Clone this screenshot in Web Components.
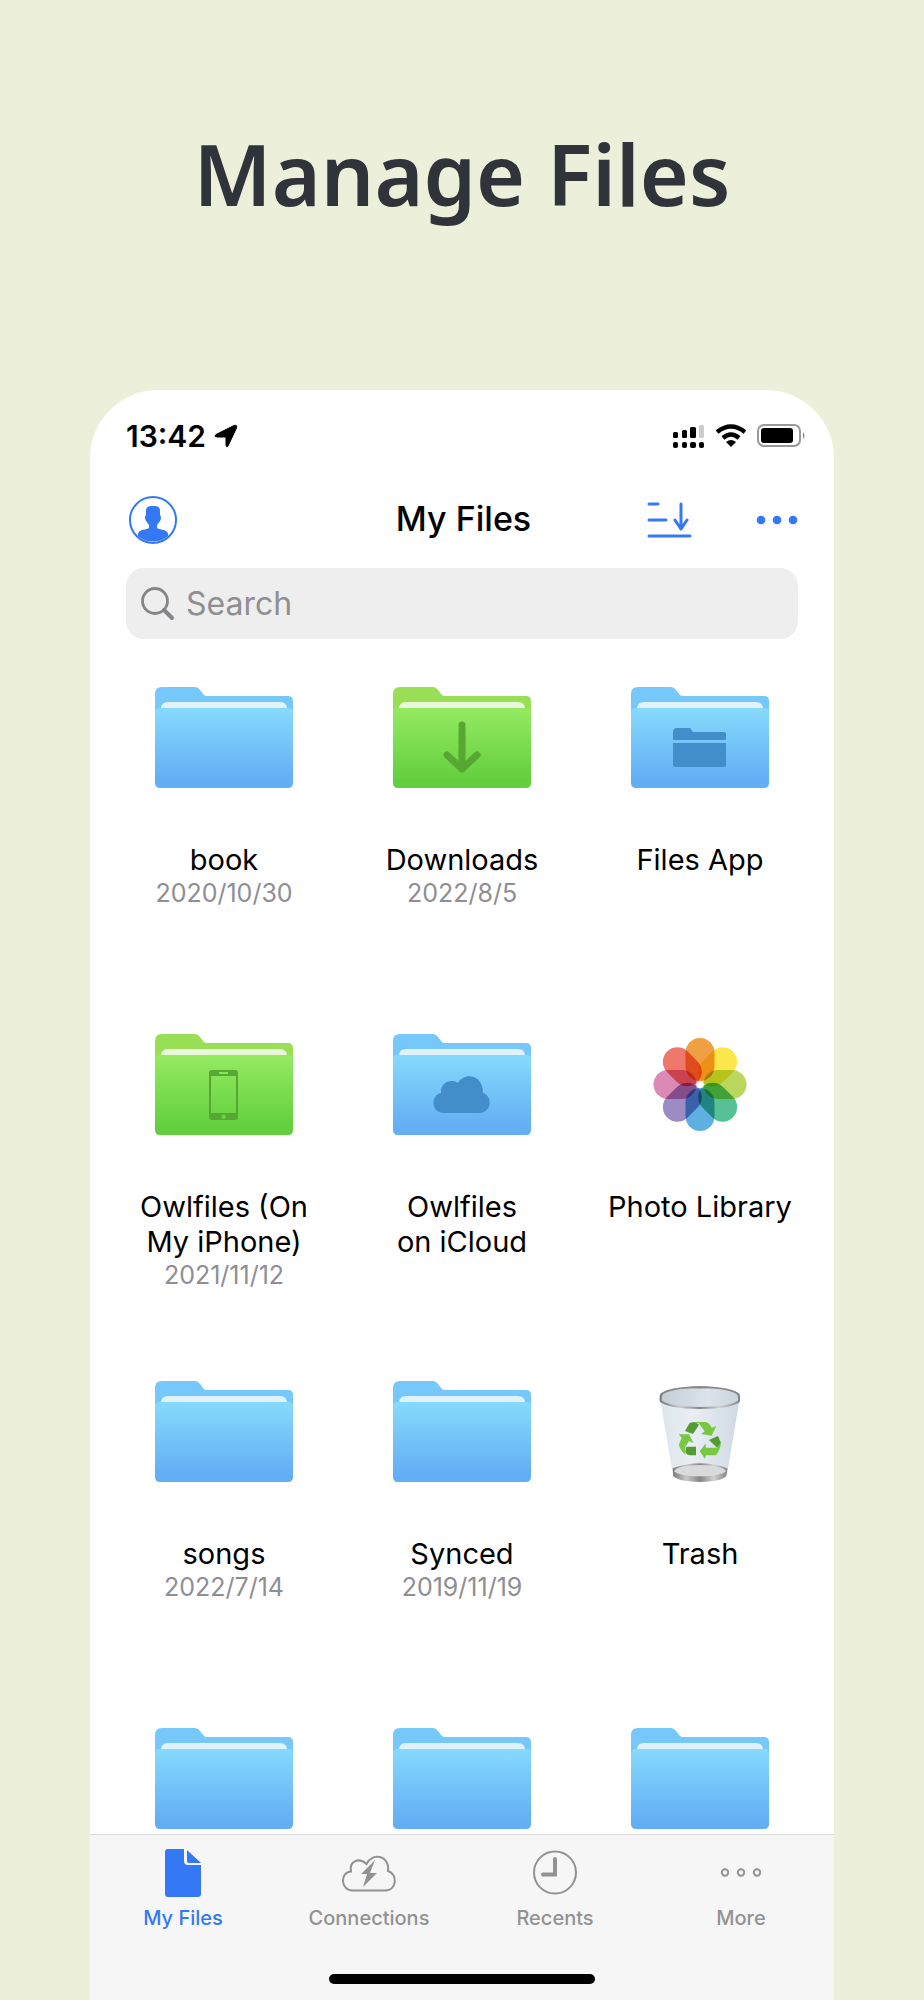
<!DOCTYPE html>
<html lang="en">
<head>
<meta charset="utf-8">
<meta name="viewport" content="width=device-width, initial-scale=1">
<title>Manage Files</title>
<style>
    html, body {
        margin: 0;
        height: 100%;
    }
    body {
        background-color: #ecf0da;
        font-family: Inter, "Liberation Sans", sans-serif;
        color: #000;
    }
</style>
</head>
<body>

<promo-page>
    <span slot="headline">Manage Files</span>
    <status-bar time="13:42"></status-bar>
    <nav-bar>My Files</nav-bar>
    <search-field placeholder="Search"></search-field>
    <file-grid>
        <file-item name="book" date="2020/10/30"></file-item>
        <file-item name="Downloads" date="2022/8/5" color="green" glyph="download"></file-item>
        <file-item name="Files App" glyph="folder"></file-item>
        <file-item name="Owlfiles (On My iPhone)" date="2021/11/12" color="green" glyph="phone"></file-item>
        <file-item name="Owlfiles on&nbsp;iCloud" glyph="cloud"></file-item>
        <file-item name="Photo Library" picture="photos"></file-item>
        <file-item name="songs" date="2022/7/14"></file-item>
        <file-item name="Synced" date="2019/11/19"></file-item>
        <file-item name="Trash" picture="trash"></file-item>
        <file-item></file-item>
        <file-item></file-item>
        <file-item></file-item>
    </file-grid>
    <tab-bar>
        <tab-item icon="file" active>My Files</tab-item>
        <tab-item icon="connections">Connections</tab-item>
        <tab-item icon="recents">Recents</tab-item>
        <tab-item icon="more">More</tab-item>
    </tab-bar>
</promo-page>

<script>
    ((customElements)=>{
        'use strict';

        // marks drawn on the front of a folder
        const GLYPHS = {
            download: `<path d="M69 38v44M54 68l15 14 15-14" fill="none" stroke="var(--glyph)" stroke-width="7" stroke-linecap="round" stroke-linejoin="round"/>`,
            folder: `<path fill="var(--glyph)" d="M42 53v-8q0-4 4-4h13l3 4h31q2 0 2 2v6zM42 56h53v22q0 2-2 2H44q-2 0-2-2z"/>`,
            phone: `<path fill="var(--glyph)" fill-rule="evenodd" d="M57 36h23q3 0 3 3v44q0 3-3 3H57q-3 0-3-3V39q0-3 3-3zM56 42v37h25V42zM64 38v2h9v-2zM68.500 80.500a2.300 2.300 0 1 0 .1 0z"/>`,
            cloud: `<path fill="var(--glyph)" d="M51 79C38 79 37 61 48 59C47 49 58 44 65 49C71 38 90 40 90 59C100 62 99 79 86 79z"/>`
        };

        const PETALS = ['#f0a043', '#fbe74c', '#b9d75c', '#58c095', '#5eb0e1', '#9d8cc3', '#da8ab5', '#ee786c'];

        const PICTURES = {
            photos: PETALS.map((color, index)=>
                `<rect x="54.500" y="4" width="29" height="43" rx="14.500" fill="${color}" style="mix-blend-mode:multiply" transform="rotate(${index * 45} 69 50.500)"/>`
            ).join('') + '<circle cx="69" cy="50.500" r="3.500" fill="#fff"/>',
            trash: `
                <defs>
                    <linearGradient id="glass"><stop stop-color="#dce5ec"/><stop offset=".4" stop-color="#e9eef3"/><stop offset="1" stop-color="#cfd9e2"/></linearGradient>
                    <linearGradient id="inner"><stop stop-color="#c3cdd5"/><stop offset=".6" stop-color="#dbe4ea"/><stop offset="1" stop-color="#c9d3da"/></linearGradient>
                    <linearGradient id="metal"><stop stop-color="#777"/><stop offset=".25" stop-color="#c9c9c9"/><stop offset=".5" stop-color="#858585"/><stop offset=".75" stop-color="#d0d0d0"/><stop offset="1" stop-color="#858585"/></linearGradient>
                </defs>
                <g transform="translate(-11 -21) scale(.33333)">
                    <path fill="url(#glass)" d="M119 110L159 345Q240 375 321 345L360 110Z"/>
                    <path fill="url(#metal)" d="M158 325Q240 295 322 325L319 349Q300 366 240 366Q180 366 160 349Z"/>
                    <path fill="#d9dadc" d="M162 334Q174 315 240 315Q307 315 318 334Q300 349 240 349Q180 349 162 334Z"/>
                    <path fill="url(#inner)" stroke="url(#metal)" stroke-width="6" d="M122 108Q132 84 240 82Q347 84 357 108V123Q335 143 240 144Q145 143 122 123Z"/>
                    <path fill="none" stroke="#89898b" stroke-width="5" d="M121 104Q145 83 240 81Q335 83 358 104"/>
                    <path fill="#78c844" d="M210 186H256Q267 187 275 203L289 198L275 227L243 222L254 214L236 190Z"/>
                    <path fill="#539b32" d="M195 213L209 189Q224 183 237 194L219 222Z"/>
                    <path fill="#78c844" d="M176 223L207 223L221 249L207 244L196 260V284Q176 265 177 253L185 233Z"/>
                    <path fill="#539b32" d="M199 260H228V286H208Q195 283 197 270Z"/>
                    <path fill="#539b32" d="M267 240L294 228L302 247Q302 261 292 264Z"/>
                    <path fill="#78c844" d="M302 250Q302 269 288 286H258L255 296L239 274L256 251L258 263H290Z"/>
                </g>`
        };

        const TAB_ICONS = {
            file: `<path fill="currentColor" d="M13 0h16v12q0 4 4 4h13v29q0 3-3 3H13q-3 0-3-3V3q0-3 3-3zM32 1l14 13H34q-2 0-2-2z"/>`,
            connections: `
                <path fill="none" stroke="currentColor" stroke-width="2" d="M12 41.500C-1 41.500-1 23 10 22.500C8 12 18 8 25.500 15C31 3 49 6 47 22C57 25 56 41.500 44 41.500z"/>
                <path fill="currentColor" d="M34 11L20 25h6l-4 13 14-14h-7z"/>`,
            recents: `
                <circle cx="28" cy="23.500" r="21" fill="none" stroke="currentColor" stroke-width="2"/>
                <path fill="none" stroke="currentColor" stroke-width="4" stroke-linecap="round" d="M28 10v15.500H16"/>`,
            more: `<g fill="none" stroke="currentColor" stroke-width="2"><circle cx="12" cy="23.500" r="3.200"/><circle cx="28" cy="23.500" r="3.200"/><circle cx="44" cy="23.500" r="3.200"/></g>`
        };

        class BaseElement extends HTMLElement{
            connectedCallback(){
                if(!this.shadowRoot){
                    this.attachShadow({mode: 'open'}).innerHTML = this.render();
                }
            }
        }

        class PromoPage extends BaseElement{
            render(){
                return `
                <style>
                    :host{
                        display: flex;
                        flex-direction: column;
                        box-sizing: border-box;
                        height: 100vh;
                        padding: 116px 90px 0;
                    }
                    h1{
                        margin: 0 0 158px;
                        font: 600 84px/116px "Noto Sans", "Open Sans", sans-serif;
                        text-align: center;
                        color: #30333a;
                    }
                    main{
                        display: flex;
                        flex: 1;
                        flex-direction: column;
                        min-height: 0;
                        overflow: hidden;
                        background-color: #fff;
                        border-radius: 68px 68px 0 0;
                    }
                </style>
                <h1><slot name="headline"></slot></h1>
                <main><slot></slot></main>`;
            }
        }

        class StatusBar extends BaseElement{
            render(){
                return `
                <style>
                    :host{
                        display: flex;
                        align-items: center;
                        height: 92px;
                        padding: 0 29px 0 36px;
                        gap: 8px;
                        font-size: 30px;
                        font-weight: 600;
                        line-height: 36px;
                    }
                    .indicators{
                        display: flex;
                        align-items: center;
                        gap: 11px;
                        margin-left: auto;
                    }
                    svg{
                        display: block;
                    }
                </style>
                <time>${this.getAttribute('time')}</time>
                <svg width="24" height="24" viewBox="0 0 24 24"><path stroke="#000" stroke-linejoin="round" d="M20 1.500q3.500-1 2.500 2.500L14 22q-1.500 2-2-1v-8H3q-3.500-.5-1-2.500z"/></svg>
                <div class="indicators">
                    <svg width="32" height="24" viewBox="0 0 32 24">
                        <rect y="8" width="5" height="6" rx="1.500"/><rect x="9" y="6" width="5" height="8" rx="1.500"/><rect x="17" y="3" width="6" height="11" rx="1.500"/>
                        <rect x="26" y="1" width="5" height="13" rx="1.500" fill="#ccc"/>
                        <rect y="18" width="5" height="6" rx="2"/><rect x="9" y="18" width="5" height="6" rx="2"/><rect x="17" y="18" width="6" height="6" rx="2"/><rect x="26" y="18" width="5" height="6" rx="2"/>
                    </svg>
                    <svg width="30" height="24" viewBox="0 0 30 24">
                        <path d="M1 8Q15-3 29 8M7 14Q15 7 23 14" fill="none" stroke="#000" stroke-width="4.500"/>
                        <path d="M10 18Q15 14 20 18L15 23z"/>
                    </svg>
                    <svg width="48" height="24" viewBox="0 0 48 24">
                        <rect x="1" y="1" width="42" height="21" rx="6" fill="none" stroke="#999" stroke-width="2"/>
                        <rect x="4" y="4" width="32" height="15" rx="3"/>
                        <path d="M46 8q3 3.500 0 7z" fill="#888"/>
                    </svg>
                </div>`;
            }
        }

        class NavBar extends BaseElement{
            render(){
                return `
                <style>
                    :host{
                        display: grid;
                        grid-template-columns: 1fr auto 1fr;
                        align-items: center;
                        height: 76px;
                        padding: 0 36px 0 39px;
                    }
                    h2{
                        margin: 0;
                        font-size: 34px;
                        font-weight: 500;
                        line-height: 40px;
                        padding-bottom: 2px;
                    }
                    button{
                        display: block;
                        padding: 0;
                        border: 0;
                        background: none;
                        color: #3478f6;
                    }
                    .actions{
                        display: flex;
                        align-items: center;
                        justify-content: flex-end;
                        gap: 64px;
                    }
                    svg{
                        display: block;
                    }
                </style>
                <div>
                    <button type="button" aria-label="Account">
                        <svg width="48" height="48" viewBox="0 0 48 48">
                            <circle cx="24" cy="24" r="23" fill="none" stroke="currentColor" stroke-width="2"/>
                            <path fill="currentColor" d="M24 10c6 0 7 2 7 5v4q2 2 0 6l-3 4v3q1 1 7 2 5 2 4 6A23 23 0 0 1 9 40q-1-4 4-6 6-1 7-2v-3l-3-4q-2-4 0-6v-4c0-3 1-5 7-5z"/>
                        </svg>
                    </button>
                </div>
                <h2><slot></slot></h2>
                <div class="actions">
                    <button type="button" aria-label="Sort">
                        <svg width="45" height="36" viewBox="0 0 45 36" fill="none" stroke="currentColor" stroke-width="3" stroke-linecap="round" stroke-linejoin="round">
                            <path d="M2 2h9M2 18h17M2 34h41M34 2v25M28 18l6 9 6-9"/>
                        </svg>
                    </button>
                    <button type="button" aria-label="More">
                        <svg width="42" height="10" viewBox="0 0 42 10" fill="currentColor"><circle cx="5" cy="5" r="4.300"/><circle cx="21" cy="5" r="4.300"/><circle cx="37" cy="5" r="4.300"/></svg>
                    </button>
                </div>`;
            }
        }

        class SearchField extends BaseElement{
            render(){
                const placeholder = this.getAttribute('placeholder');
                return `
                <style>
                    :host{
                        display: block;
                        margin: 10px 36px 48px;
                    }
                    label{
                        display: flex;
                        align-items: center;
                        gap: 11px;
                        height: 71px;
                        padding: 0 15px;
                        border-radius: 18px;
                        background-color: #eee;
                        color: #858589;
                    }
                    svg{
                        flex: none;
                    }
                    input{
                        flex: 1;
                        min-width: 0;
                        padding: 0;
                        border: 0;
                        outline: 0;
                        background: none;
                        color: #000;
                        font: 400 32px/40px Inter, "Liberation Sans", sans-serif;
                    }
                    input::placeholder{
                        color: #8e8e93;
                        opacity: 1;
                    }
                </style>
                <label>
                    <svg width="34" height="34" viewBox="0 0 34 34" fill="none" stroke="currentColor" stroke-linecap="round"><circle cx="14" cy="14" r="12.500" stroke-width="2.800"/><path d="M23 23l8 8" stroke-width="4"/></svg>
                    <input type="search" placeholder="${placeholder}" aria-label="${placeholder}">
                </label>`;
            }
        }

        class FileGrid extends BaseElement{
            render(){
                return `
                <style>
                    :host{
                        display: grid;
                        flex: 1;
                        grid-template-columns: repeat(3, 1fr);
                        grid-auto-rows: 347px;
                        min-height: 0;
                        padding: 0 15px;
                        overflow: hidden;
                    }
                </style>
                <slot></slot>`;
            }
        }

        class FileItem extends BaseElement{
            render(){
                const name = this.getAttribute('name') || '';
                const date = this.getAttribute('date');
                return `
                <style>
                    :host{
                        --back: #77c8fa;
                        --sheet: #dff2fe;
                        --top: #86dafc;
                        --bottom: #64aef5;
                        --glyph: #438dca;
                        display: flex;
                        justify-content: center;
                    }
                    :host([color=green]){
                        --back: #98df55;
                        --sheet: #e9f8da;
                        --top: #95ea60;
                        --bottom: #63cf3f;
                        --glyph: #56a833;
                    }
                    a{
                        display: flex;
                        flex-direction: column;
                        align-items: center;
                        width: 190px;
                        color: inherit;
                        text-align: center;
                        text-decoration: none;
                    }
                    svg{
                        display: block;
                        margin-bottom: 54px;
                        isolation: isolate;
                    }
                    .name{
                        font-size: 29px;
                        line-height: 35px;
                    }
                    time{
                        font-size: 25px;
                        line-height: 33px;
                        color: #8e8e93;
                    }
                </style>
                <a href="#" aria-label="${name || 'Folder'}">
                    <svg width="138" height="101" viewBox="0 0 138 101">${this._getPicture()}</svg>
                    ${name ? `<span class="name">${name}</span>` : ''}
                    ${date ? `<time>${date}</time>` : ''}
                </a>`;
            }

            _getPicture(){
                const picture = this.getAttribute('picture');
                return picture ? PICTURES[picture] : this._buildFolder();
            }

            _buildFolder(){
                return `
                    <defs><linearGradient id="front" x2="0" y2="1"><stop stop-color="var(--top)"/><stop offset=".9" stop-color="var(--bottom)"/></linearGradient></defs>
                    <path fill="var(--back)" d="M0 30V7q0-7 7-7h33q3 0 5 3l4 5q1 1 3 1h81q5 0 5 5v16z"/>
                    <path fill="var(--sheet)" d="M6 22q0-7 7-7h112q7 0 7 7z"/>
                    <path fill="url(#front)" d="M0 25q0-4 5-4h128q5 0 5 4v71q0 5-5 5H5q-5 0-5-5z"/>
                    ${GLYPHS[this.getAttribute('glyph')] || ''}`;
            }
        }

        class TabBar extends BaseElement{
            render(){
                return `
                <style>
                    :host{
                        display: block;
                        flex: none;
                        padding-bottom: 16px;
                        border-top: 1px solid #d8d8d8;
                        background-color: #f6f6f6;
                    }
                    nav{
                        display: grid;
                        grid-template-columns: repeat(4, 1fr);
                        height: 125px;
                        padding-top: 14px;
                    }
                    .home{
                        width: 266px;
                        height: 10px;
                        margin: 0 auto;
                        border-radius: 5px;
                        background-color: #000;
                    }
                </style>
                <nav><slot></slot></nav>
                <div class="home"></div>`;
            }
        }

        class TabItem extends BaseElement{
            render(){
                return `
                <style>
                    :host{
                        display: block;
                        color: #929292;
                    }
                    :host([active]){
                        color: #3478f6;
                    }
                    a{
                        display: flex;
                        flex-direction: column;
                        align-items: center;
                        gap: 8px;
                        color: inherit;
                        font-size: 20px;
                        font-weight: 500;
                        line-height: 26px;
                        text-decoration: none;
                    }
                </style>
                <a href="#">
                    <svg width="56" height="48" viewBox="0 0 56 48">${TAB_ICONS[this.getAttribute('icon')]}</svg>
                    <slot></slot>
                </a>`;
            }
        }

        customElements.define('promo-page', PromoPage);
        customElements.define('status-bar', StatusBar);
        customElements.define('nav-bar', NavBar);
        customElements.define('search-field', SearchField);
        customElements.define('file-grid', FileGrid);
        customElements.define('file-item', FileItem);
        customElements.define('tab-bar', TabBar);
        customElements.define('tab-item', TabItem);
    })(window.customElements);
</script>
</body>
</html>
